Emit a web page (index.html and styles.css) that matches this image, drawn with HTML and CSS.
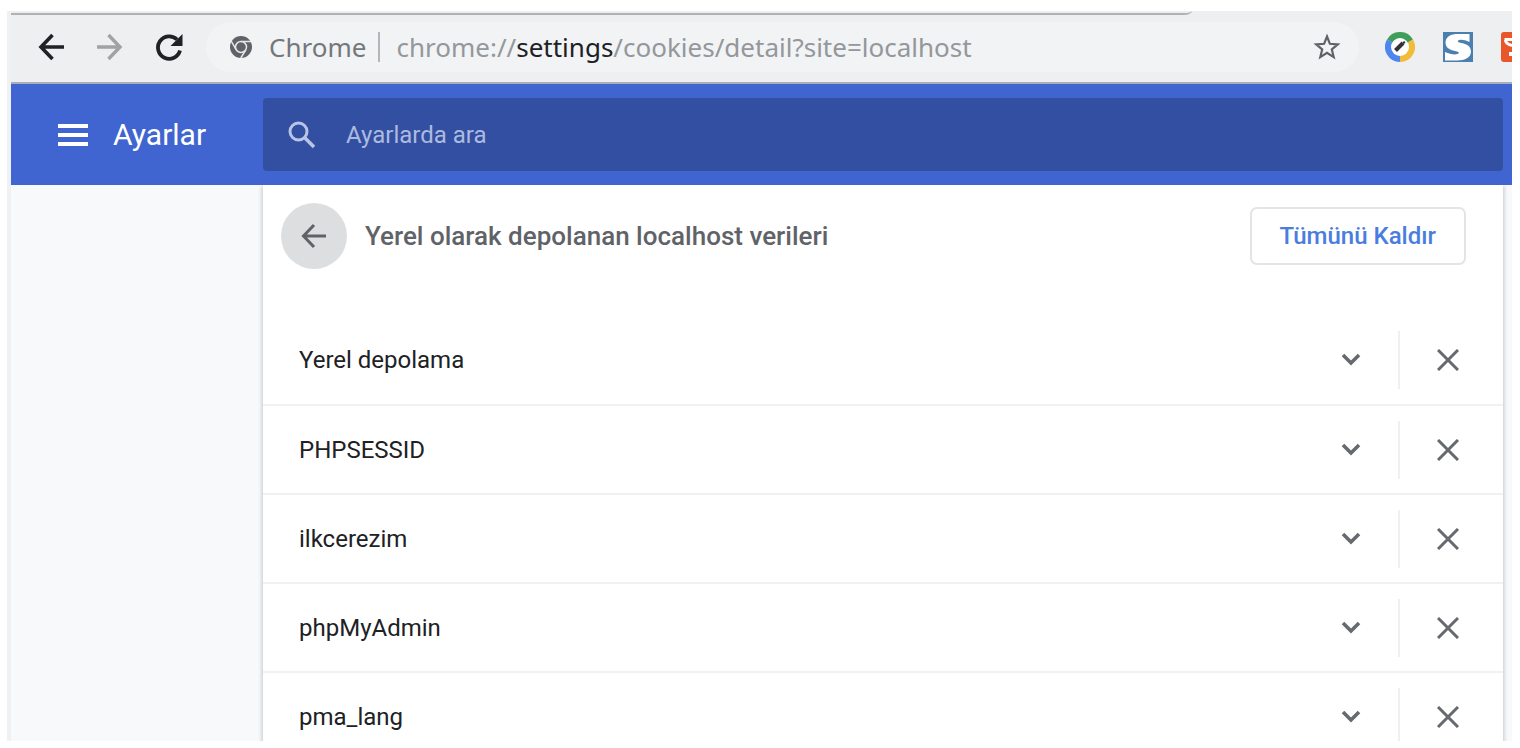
FILE: index.html
```
<!DOCTYPE html>
<html lang="tr">
<head>
    <meta charset="UTF-8">
    <title>Ayarlar</title>
    <link rel="stylesheet" href="styles.css">
</head>
<body>

    <!-- icons used in every row -->
    <svg class="sprite" aria-hidden="true">
        <symbol id="chevron" viewBox="0 0 20 20">
            <path d="M2 5l8 8 8-8" fill="none" stroke="currentColor" stroke-width="3.600"/>
        </symbol>
        <symbol id="close" viewBox="0 0 22 22">
            <path d="M1 1l20 20M21 1L1 21" fill="none" stroke="currentColor" stroke-width="3"/>
        </symbol>
    </svg>

    <div class="window">

        <!-- browser toolbar -->
        <div class="toolbar">
            <div class="tab-line"></div>
            <button class="nav-button" aria-label="Geri">
                <svg width="28" height="28" viewBox="0 0 28 28"><path d="M27 14H4M15.500 2L4 14l11.500 12" fill="none" stroke="#202124" stroke-width="3.600"/></svg>
            </button>
            <button class="nav-button" aria-label="İleri" disabled>
                <svg width="28" height="28" viewBox="0 0 28 28"><path d="M1 14h24M12.500 2L24 14 12.500 26" fill="none" stroke="#a0a2a4" stroke-width="3.400"/></svg>
            </button>
            <button class="nav-button" aria-label="Yenile">
                <svg width="28" height="28" viewBox="0 0 28 28"><path d="M22 6.500A11.200 11.200 0 1 0 25 17.500" fill="none" stroke="#202124" stroke-width="3.800"/><path d="M27.500 1v12H15.500z" fill="#202124"/></svg>
            </button>
            <div class="omnibox">
                <svg class="site-icon" width="24" height="24" viewBox="0 0 24 24">
                    <circle cx="12" cy="12" r="11" fill="#5f6368"/>
                    <circle cx="12" cy="12" r="5.500" fill="none" stroke="#e4e6e8" stroke-width="1.500"/>
                    <path d="M12 6.500h10M7.200 14.800L2.200 6M16.800 14.800L11.800 23" fill="none" stroke="#e4e6e8" stroke-width="1.500"/>
                </svg>
                <span class="site-name">Chrome</span>
                <span class="url">chrome://<b>settings</b>/cookies/detail?site=localhost</span>
                <button class="star" aria-label="Yer işareti">
                    <svg width="28" height="28" viewBox="0 0 28 28"><path d="M14 3.500l2.900 7.300 7.900.6-6 5.100 1.900 7.600-6.700-4.200-6.700 4.200 1.900-7.600-6-5.100 7.900-.6z" fill="none" stroke="#5f6368" stroke-width="2.200"/></svg>
                </button>
            </div>
            <div class="extensions">
                <svg width="30" height="30" viewBox="0 0 30 30">
                    <path d="M15 15L2 7.500A15 15 0 0 1 28 7.500z" fill="#3f9e5a"/>
                    <path d="M15 15L28 7.500A15 15 0 0 1 15 30z" fill="#f2bc3b"/>
                    <path d="M15 15v15A15 15 0 0 1 2 7.500z" fill="#4c86ee"/>
                    <circle cx="15" cy="15" r="9" fill="#fff"/>
                    <path d="M10.500 18.500l7.500-7.500" stroke="#333" stroke-width="4"/>
                    <path d="M18 11l2-1" stroke="#333" stroke-width="2"/>
                </svg>
                <svg width="30" height="30" viewBox="0 0 30 30">
                    <path d="M0 0h30v30H0z" fill="#4a7fb0"/>
                    <path d="M26.500 2v8c-4-1.500-7-2.500-10-2-2.500.5-2 2 0 2.500 4 1 11.500 2 11.500 9 0 6-6 9-14 9H2v-8.500c5 2 9 3 12.500 2 2-.7 1.500-2-.5-2.500C9 18.500 2.500 17 2.500 10.500 2.500 4.500 8 2 15 2z" fill="#fff"/>
                </svg>
                <svg width="11" height="30" viewBox="0 0 11 30">
                    <path d="M3 0h8v30H3q-3 0-3-3V3q0-3 3-3z" fill="#e8562a"/>
                    <path d="M3.500 7.500H11M4.500 8q0 4 6.500 5.500M9.500 20v4" fill="none" stroke="#fff" stroke-width="3"/>
                </svg>
            </div>
        </div>

        <!-- settings header -->
        <header class="header">
            <div class="brand">
                <button class="menu-button" aria-label="Menü">
                    <svg width="30" height="24" viewBox="0 0 30 24"><path d="M0 3h30M0 12h30M0 21h30" stroke="#fff" stroke-width="4"/></svg>
                </button>
                <h1>Ayarlar</h1>
            </div>
            <label class="search">
                <svg width="28" height="28" viewBox="0 0 28 28"><circle cx="10.500" cy="10.500" r="8.500" fill="none" stroke="#b8c4e8" stroke-width="3"/><path d="M16.500 16.500l9.500 9.500" stroke="#b8c4e8" stroke-width="3.600"/></svg>
                <input type="text" placeholder="Ayarlarda ara" aria-label="Ayarlarda ara">
            </label>
        </header>

        <main class="main">
            <div class="card">
                <div class="card-header">
                    <button class="back-button" aria-label="Geri">
                        <svg width="26" height="26" viewBox="0 0 26 26"><path d="M25 13H3M13 2L2.500 13 13 24" fill="none" stroke="#5f6368" stroke-width="3"/></svg>
                    </button>
                    <h2>Yerel olarak depolanan localhost verileri</h2>
                    <button class="remove-all">Tümünü Kaldır</button>
                </div>
                <ul class="list">
                    <li class="row">
                        <span class="row-name">Yerel depolama</span>
                        <button class="row-button expand" aria-label="Genişlet"><svg width="20" height="20"><use href="#chevron"/></svg></button>
                        <span class="divider"></span>
                        <button class="row-button" aria-label="Kaldır"><svg width="22" height="22"><use href="#close"/></svg></button>
                    </li>
                    <li class="row">
                        <span class="row-name">PHPSESSID</span>
                        <button class="row-button expand" aria-label="Genişlet"><svg width="20" height="20"><use href="#chevron"/></svg></button>
                        <span class="divider"></span>
                        <button class="row-button" aria-label="Kaldır"><svg width="22" height="22"><use href="#close"/></svg></button>
                    </li>
                    <li class="row">
                        <span class="row-name">ilkcerezim</span>
                        <button class="row-button expand" aria-label="Genişlet"><svg width="20" height="20"><use href="#chevron"/></svg></button>
                        <span class="divider"></span>
                        <button class="row-button" aria-label="Kaldır"><svg width="22" height="22"><use href="#close"/></svg></button>
                    </li>
                    <li class="row">
                        <span class="row-name">phpMyAdmin</span>
                        <button class="row-button expand" aria-label="Genişlet"><svg width="20" height="20"><use href="#chevron"/></svg></button>
                        <span class="divider"></span>
                        <button class="row-button" aria-label="Kaldır"><svg width="22" height="22"><use href="#close"/></svg></button>
                    </li>
                    <li class="row">
                        <span class="row-name">pma_lang</span>
                        <button class="row-button expand" aria-label="Genişlet"><svg width="20" height="20"><use href="#chevron"/></svg></button>
                        <span class="divider"></span>
                        <button class="row-button" aria-label="Kaldır"><svg width="22" height="22"><use href="#close"/></svg></button>
                    </li>
                </ul>
            </div>
        </main>

    </div>

</body>
</html>
```
FILE: styles.css
```
* {
    box-sizing: border-box;
}

body {
    margin: 0;
    padding: 11px 8px 7px 7px;
    height: 100vh;
    background: #fff;
    font-family: Roboto, "Liberation Sans", sans-serif;
    color: #202124;
}

button {
    display: flex;
    align-items: center;
    justify-content: center;
    padding: 0;
    border: none;
    background: none;
    font-family: inherit;
}

svg {
    display: block;
    flex: none;
}

.sprite {
    display: none;
}

.window {
    display: flex;
    flex-direction: column;
    height: 100%;
    overflow: hidden;
    border-left: 4px solid #f0f1f3;
    background: #f8f9fb;
}

/* browser toolbar */
.toolbar {
    position: relative;
    flex: none;
    display: flex;
    align-items: center;
    height: 73px;
    padding: 0 0 0 10px;
    border-bottom: 2px solid #a9adb8;
    background: #eeeff1;
}

/* bottom edge of the tab strip */
.tab-line {
    position: absolute;
    top: 0;
    left: 0;
    right: 320px;
    height: 4px;
    border-bottom: 2px solid #b0b1b3;
    border-bottom-right-radius: 8px 4px;
}

.nav-button {
    width: 59px;
    height: 50px;
}

.omnibox {
    flex: 1;
    display: flex;
    align-items: center;
    height: 50px;
    margin-left: 8px;
    padding: 0 18px 0 23px;
    border-radius: 25px;
    background: #f1f3f4;
    font-family: "Noto Sans", sans-serif;
    font-size: 26px;
    line-height: 30px;
    white-space: nowrap;
}

.site-name {
    margin-left: 16px;
    padding-right: 12px;
    border-right: 2px solid #b4b7ba;
    color: #74787c;
}

.url {
    flex: 1;
    margin-left: 16px;
    color: #94979b;
}

.url b {
    font-weight: normal;
    color: #202124;
}

.extensions {
    display: flex;
    gap: 28px;
    margin-left: 26px;
}

/* blue settings header */
.header {
    flex: none;
    display: flex;
    align-items: center;
    height: 101px;
    padding-right: 9px;
    background: #4165d0;
}

.brand {
    flex: none;
    display: flex;
    align-items: center;
    gap: 25px;
    width: 252px;
    padding-left: 47px;
}

.brand h1 {
    margin: 0;
    font-size: 30px;
    font-weight: normal;
    color: #fff;
}

.search {
    flex: 1;
    display: flex;
    align-items: center;
    height: 73px;
    padding-left: 25px;
    border-radius: 4px;
    background: #334fa1;
}

.search input {
    flex: 1;
    margin-left: 30px;
    padding: 0;
    border: none;
    outline: none;
    background: none;
    font-family: inherit;
    font-size: 24px;
    color: #fff;
}

.search input::placeholder {
    color: #adbae0;
}

/* card */
.main {
    flex: 1;
    min-height: 0;
    padding: 0 9px 0 252px;
    overflow: hidden;
}

.card {
    background: #fff;
    box-shadow: 0 2px 4px 1px #c4c6ca;
}

.card-header {
    display: flex;
    align-items: center;
    height: 130px;
    padding: 0 37px 28px 18px;
}

.back-button {
    width: 66px;
    height: 66px;
    border-radius: 50%;
    background: #dddee0;
}

.card-header h2 {
    flex: 1;
    margin: 0 0 0 18px;
    font-size: 26px;
    font-weight: 500;
    color: #5f6368;
}

.remove-all {
    height: 58px;
    padding: 0 28px;
    border: 2px solid #e2e4e7;
    border-radius: 7px;
    font-size: 24px;
    font-weight: 500;
    color: #4a7de0;
}

.list {
    margin: 0;
    padding: 0;
    list-style: none;
}

.row {
    display: flex;
    align-items: center;
    height: 89px;
    padding: 0 7px 0 36px;
    font-size: 24px;
}

.row + .row {
    border-top: 2px solid #f1f1f2;
}

.row-name {
    flex: 1;
}

.row-button {
    width: 96px;
    height: 58px;
    color: #66696e;
}

.expand {
    width: 94px;
}

.divider {
    width: 2px;
    height: 58px;
    background: #f0f0f1;
}
```
